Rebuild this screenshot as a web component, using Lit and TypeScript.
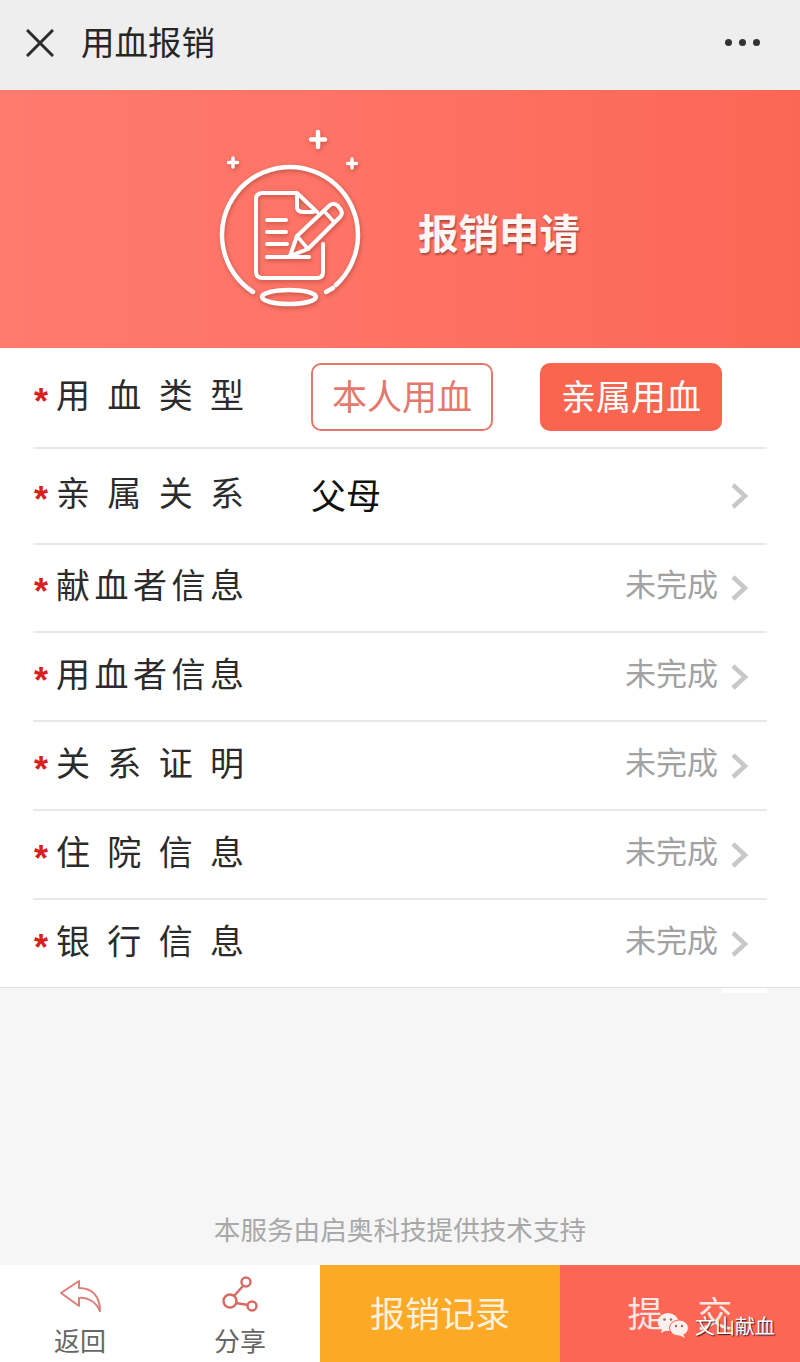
import { css, html, LitElement } from "lit";
import { customElement } from "lit/decorators.js";

interface FormRow {
  label: string;
  value?: string;
  status?: string;
  types?: boolean;
}

const ROWS: FormRow[] = [
  { label: "用血类型", types: true },
  { label: "亲属关系", value: "父母" },
  { label: "献血者信息", status: "未完成" },
  { label: "用血者信息", status: "未完成" },
  { label: "关系证明", status: "未完成" },
  { label: "住院信息", status: "未完成" },
  { label: "银行信息", status: "未完成" },
];

@customElement("app-root")
export class AppRoot extends LitElement {
  renderBannerIcon() {
    return html`
      <svg class="banner-icon" viewBox="200 120 180 200" fill="none" stroke="#fff" stroke-width="4.5" stroke-linecap="round" stroke-linejoin="round">
        <path d="M254 292A68 68 0 1 1 337 285" />
        <path d="M327 292L334 288" />
        <ellipse cx="290" cy="297" rx="27" ry="7" />
        <path d="M319 132V147M312 139.500H326" />
        <path d="M234 158V167M229.500 162.500H238.500M353 159V168M348.500 163.500H357.500" stroke-width="3.500" />
        <path d="M324 244V272Q324 278 318 278H264Q257 278 257 272V199Q257 193 264 193H298L318 212" stroke-width="4" />
        <path d="M298 194V207Q298 212 304 212H314" stroke-width="4" />
        <path d="M268 220H287M268 232H287M268 244H288M268 257H310" stroke-width="4" />
        <path d="M291 256L298 236L331 205Q335 202 339 206L342 210Q344 214 341 217L309 249Z" stroke-width="4" />
        <path d="M298 236L309 249M325 211L335 222" stroke-width="3.500" />
      </svg>
    `;
  }

  renderRow(row: FormRow) {
    return html`
      <div class="row">
        <span class="star">*</span>
        <span class="label">${row.label}</span>
        ${row.types
          ? html`<div class="types">
              <span class="type-btn">本人用血</span>
              <span class="type-btn active">亲属用血</span>
            </div>`
          : html`
              <span class="value">${row.value ?? ""}</span>
              ${row.status ? html`<span class="status">${row.status}</span>` : ""}
              <svg class="chevron" viewBox="0 0 18 26" fill="none" stroke="#c8c8c8" stroke-width="4.5">
                <path d="M2 2L14 13L2 24" />
              </svg>
            `}
      </div>
    `;
  }

  render() {
    return html`
      <div class="page">
        <header class="nav">
          <svg class="close" viewBox="0 0 28 28" fill="none" stroke="#2b2b2b" stroke-width="3">
            <path d="M1 1L27 27M27 1L1 27" />
          </svg>
          <span class="nav-title">用血报销</span>
          <span class="dots"><i></i><i></i><i></i></span>
        </header>

        <section class="banner">
          ${this.renderBannerIcon()}
          <span class="banner-title">报销申请</span>
        </section>

        <section class="list">${ROWS.map((r) => this.renderRow(r))}</section>
        <div class="stray"></div>

        <div class="spacer"></div>
        <div class="note">本服务由启奥科技提供技术支持</div>

        <footer class="footer">
          <div class="tool">
            <svg viewBox="55 1272 50 46" width="50" height="46" fill="none" stroke="#dc7f77" stroke-width="2" stroke-linejoin="round">
              <path d="M79 1281L61 1293L79 1306V1298C88 1297 96 1302 100 1311C100 1296 92 1288 79 1288Z" />
            </svg>
            <span>返回</span>
          </div>
          <div class="tool">
            <svg viewBox="215 1272 50 46" width="50" height="46" fill="none" stroke="#d66c64" stroke-width="2.500">
              <circle cx="246" cy="1282" r="4.500" />
              <circle cx="230" cy="1301" r="6.500" />
              <circle cx="252" cy="1306" r="4.500" />
              <path d="M243 1286L234 1296M236 1303L248 1305" />
            </svg>
            <span>分享</span>
          </div>
          <div class="action records">报销记录</div>
          <div class="action submit">提　交</div>
          <div class="watermark">
            <svg viewBox="0 0 32 27" width="32" height="27" fill="#fdf0ee">
              <ellipse cx="11" cy="10" rx="10.500" ry="9" />
              <path d="M5 16L4 21L10 18Z" />
              <ellipse cx="22" cy="16" rx="9.500" ry="8" stroke="#fd6554" stroke-width="1" />
              <path d="M26 22L28 26L22 23Z" />
              <circle cx="7.500" cy="7.500" r="1.300" fill="#9a6a62" />
              <circle cx="14" cy="7.500" r="1.300" fill="#9a6a62" />
              <circle cx="19" cy="14" r="1.200" fill="#9a6a62" />
              <circle cx="25" cy="14" r="1.200" fill="#9a6a62" />
            </svg>
            <span>文山献血</span>
          </div>
        </footer>
      </div>
    `;
  }

  static styles = css`
    :host {
      display: block;
      font-family: "Noto Sans CJK SC", "Liberation Sans", sans-serif;
    }

    .page {
      background: #f6f6f6;
      display: flex;
      flex-direction: column;
      height: 1362px;
      overflow: hidden;
      width: 800px;
    }

    .nav {
      align-items: center;
      background: #eeeeee;
      box-sizing: border-box;
      display: flex;
      flex: none;
      height: 90px;
      padding: 0 40px 5px 26px;
    }

    .close {
      height: 28px;
      width: 28px;
    }

    .nav-title {
      color: #262626;
      flex: 1;
      font-size: 33.5px;
      line-height: 44px;
      margin: 0 0 3px 27px;
    }

    .dots {
      display: flex;
      gap: 7px;
    }

    .dots i {
      background: #333;
      border-radius: 50%;
      display: block;
      height: 7px;
      width: 7px;
    }

    .banner {
      align-items: flex-start;
      background: linear-gradient(90deg, #ff7b6e 0%, #fe7264 50%, #fb6755 100%);
      box-sizing: border-box;
      display: flex;
      flex: none;
      height: 258px;
      padding: 30px 0 0 199px;
    }

    .banner-icon {
      filter: drop-shadow(1px 2px 2px rgba(130, 50, 40, 0.45));
      flex: none;
      height: 200px;
      width: 180px;
    }

    .banner-title {
      color: #fdf6f4;
      font-size: 40.5px;
      font-weight: 700;
      line-height: 56px;
      margin: 84px 0 0 39px;
      text-shadow: 1px 2px 2px rgba(120, 50, 40, 0.6);
    }

    .list {
      background: #fff;
      border-bottom: 1px solid #dfdfdf;
      box-sizing: border-box;
      display: grid;
      flex: none;
      grid-template-rows: 101px 96px 88px 89px 89px 89px 87px;
      height: 640px;
      padding: 0 33px;
    }

    .row {
      align-items: center;
      border-bottom: 2px solid #e8e8e8;
      box-sizing: border-box;
      display: flex;
    }

    .row:last-child {
      border-bottom: none;
    }

    .star {
      color: #d9201f;
      font-family: "Liberation Sans", sans-serif;
      font-size: 36px;
      font-weight: 700;
      height: 30px;
      line-height: 38px;
      margin-left: -1px;
      text-align: center;
      width: 18px;
    }

    .label {
      color: #2b2b2b;
      flex: none;
      font-size: 34px;
      line-height: 44px;
      margin: 0 0 8px 6px;
      text-align: justify;
      text-align-last: justify;
      width: 188px;
    }

    .types {
      display: flex;
      gap: 47px;
      margin: 0 0 1px 67px;
    }

    .type-btn {
      border: 2px solid #e5786c;
      border-radius: 10px;
      box-sizing: border-box;
      color: #e5786c;
      font-size: 35px;
      height: 68px;
      line-height: 60px;
      text-align: center;
      width: 182px;
    }

    .type-btn.active {
      background: #f9654f;
      border-color: #f9654f;
      color: #fff;
    }

    .value {
      color: #111;
      flex: 1;
      font-size: 35px;
      line-height: 44px;
      margin: 0 0 5px 67px;
    }

    .status {
      color: #a2a2a2;
      font-size: 31px;
      line-height: 44px;
      margin-bottom: 10px;
    }

    .chevron {
      flex: none;
      height: 26px;
      margin: 0 18px 0 13px;
      width: 18px;
    }

    .stray {
      background: #fff;
      flex: none;
      height: 5px;
      margin-left: 722px;
      width: 45px;
    }

    .spacer {
      flex: 1;
    }

    .note {
      color: #a8a8a8;
      flex: none;
      font-size: 26.6px;
      line-height: 36px;
      padding-bottom: 18px;
      text-align: center;
    }

    .footer {
      background: #fff;
      display: flex;
      flex: none;
      height: 97px;
      position: relative;
    }

    .tool {
      align-items: center;
      box-sizing: border-box;
      color: #666;
      display: flex;
      flex-direction: column;
      font-size: 26px;
      line-height: 32px;
      padding-top: 7px;
      width: 160px;
    }

    .tool span {
      margin-top: 6px;
    }

    .action {
      box-sizing: border-box;
      color: #fff;
      font-size: 35px;
      line-height: 93px;
      padding-bottom: 4px;
      text-align: center;
      width: 240px;
    }

    .action.records {
      background: #fca926;
      color: #fdf0dc;
    }

    .action.submit {
      background: #fd6554;
      color: #fde8e4;
    }

    .watermark {
      align-items: center;
      color: #fff;
      display: flex;
      font-size: 20px;
      gap: 6px;
      left: 657px;
      line-height: 26px;
      position: absolute;
      text-shadow: 1px 1px 1px rgba(40, 20, 20, 0.9);
      top: 47px;
    }
  `;
}
